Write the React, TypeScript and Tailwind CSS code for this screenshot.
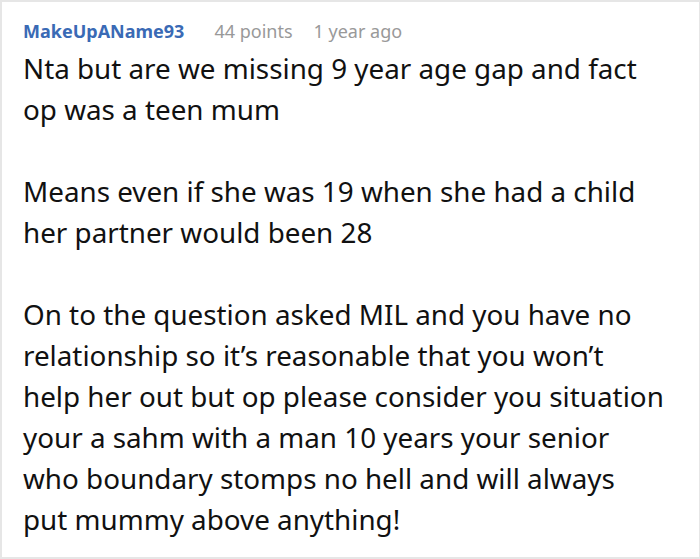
import React from "react";

export default function App() {
  return (
    <div className="w-[700px] h-[559px] bg-white border-l-2 border-t-2 border-b-2 border-r border-[#e6e6e6] overflow-hidden" style={{ fontFamily: '"Noto Sans", "Open Sans", sans-serif' }}>
      <div className="pl-[21px] pt-[16px]">
        <div className="flex items-baseline text-[18px] leading-[26px]">
          <span className="font-bold text-[#3a6ab5]">MakeUpAName93</span>
          <span className="ml-[30px] text-[#999999]">44 points</span>
          <span className="ml-[21px] text-[#999999]">1 year ago</span>
        </div>
        <div className="w-[670px] whitespace-nowrap text-[27.8px] leading-[41px] text-[#111111] mt-[4px]">
          <p>Nta but are we missing 9 year age gap and fact<br />op was a teen mum</p>
          <p className="mt-[41px]">Means even if she was 19 when she had a child<br />her partner would been 28</p>
          <p className="mt-[41px]">On to the question asked MIL and you have no<br />relationship so it’s reasonable that you won’t<br />help her out but op please consider you situation<br />your a sahm with a man 10 years your senior<br />who boundary stomps no hell and will always<br />put mummy above anything!</p>
        </div>
      </div>
    </div>
  );
}
